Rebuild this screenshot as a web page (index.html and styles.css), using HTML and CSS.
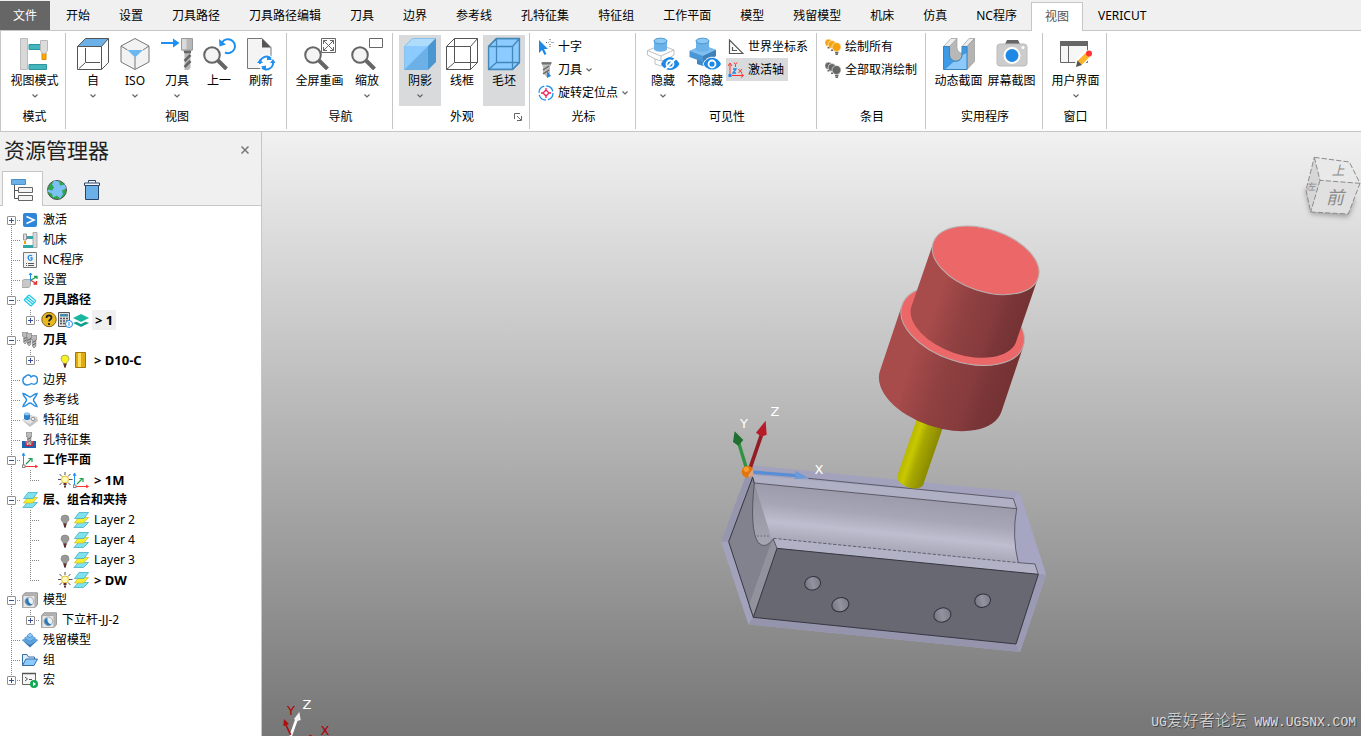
FILE: index.html
```html
<!DOCTYPE html>
<html lang="zh-CN">
<head>
    <meta charset="UTF-8">
    <meta name="viewport" content="width=device-width, initial-scale=1.0">
    <title>PowerMill</title>
    <link rel="stylesheet" href="styles.css">
</head>
<body>
    <!-- shared icons -->
    <svg class="defs" aria-hidden="true">
        <symbol id="chevron" viewBox="0 0 6 4"><path d="M.5 .5L3 3L5.500 .5" fill="none" stroke="#666" stroke-width="1.2"/></symbol>
        <symbol id="wire" viewBox="0 0 32 32">
            <path d="M8.500 .5V24.500H31.500M8.500 24.500L.5 31.500M.5 8.500H24.500V31.500H.5ZM.5 8.500L8.500 .5H31.500L24.500 8.500M31.500 .5V24.500L24.500 31.500" stroke-linejoin="round"/>
        </symbol>
        <symbol id="lens" viewBox="0 0 32 32">
            <circle cx="9" cy="17" r="7.800" fill="#f4f4f4" stroke="#666" stroke-width="2"/>
            <path d="M15 22.500L23.500 31" stroke="#666" stroke-width="4"/>
        </symbol>
        <symbol id="bulbs" viewBox="0 0 16 16">
            <g fill="currentColor" stroke="#fff" stroke-width=".6">
                <circle cx="3.500" cy="3.800" r="3.700"/><circle cx="7" cy="5.500" r="4"/><circle cx="11.500" cy="8" r="4.500"/>
            </g>
            <path d="M2.500 8.700h2M6 11.200h2M10 13.500h3.500M10.500 15.300h2.500" stroke="#666" stroke-width="1.500"/>
        </symbol>
        <symbol id="layers" viewBox="0 0 16 16">
            <path d="M5.500 10.500h10l-5 5H.8z" fill="#7fe0ee" stroke="#38a8bc" stroke-width=".7"/>
            <path d="M5.500 5.500h10l-5 5.500H1.500z" fill="#f5ee30" stroke="#c9b820" stroke-width=".7"/>
            <path d="M6 .5h9.500l-4.500 6H1.500z" fill="#7fe0ee" stroke="#38a8bc" stroke-width=".7"/>
        </symbol>
        <symbol id="bulb" viewBox="0 0 16 16">
            <path d="M8 3a4 4 0 0 0-4 4c0 2 2.500 3 2.500 5h3c0-2 2.500-3 2.500-5a4 4 0 0 0-4-4z" fill="currentColor" stroke="#77776a" stroke-width=".6"/>
            <path d="M6.500 12.500h3M7 14.500h2" stroke="#5a3030" stroke-width="2"/>
        </symbol>
        <symbol id="bulb-lit" viewBox="0 0 16 16">
            <path d="M8 0v3M1 7.500h3M12 7.500h3.500M2.500 2l2.500 2.500M13.500 2L11 4.500M2.500 13L5 10.500M13.500 13L11 10.500" stroke="#555"/>
            <circle cx="8" cy="7.500" r="3.500" fill="#fffbc0" stroke="#e8c020"/>
            <path d="M6.500 12h3M7 14.500h2" stroke="#5a3030" stroke-width="2"/>
        </symbol>
        <symbol id="plane" viewBox="0 0 16 16">
            <path d="M1.500 13V2M0 4l1.500-3L3 4" fill="none" stroke="#1e90e8"/>
            <path d="M3 14.500h12M13 13l2.500 1.500L13 16" fill="none" stroke="#f33"/>
            <path d="M4 12L9 7M6.500 6.500H10V10" fill="none" stroke="#20a050" stroke-width="1.200"/>
            <rect x=".5" y="13" width="2.500" height="2.500" fill="#fff" stroke="#888"/>
        </symbol>
        <symbol id="solid" viewBox="0 0 16 16">
            <path d="M.5 3.500L3 .8h12.500v11.700L13 15.500H.5z" fill="#b4b4b4" stroke="#999"/>
            <rect x="1" y="3.500" width="12" height="12" rx="1" fill="#e6e6e6" stroke="#aaa"/>
            <circle cx="7.300" cy="9.300" r="4.300" fill="#e8f2fa" stroke="#999" stroke-width=".8"/>
            <path d="M4.500 6.500a4 4 0 0 0 6 5.500C8 12 6 10 6.500 6z" fill="#2f78b8"/>
        </symbol>
        <symbol id="drill" viewBox="0 0 6 14">
            <path d="M0 0h6v5H5v7l-2 2-1.500-2V5H0z" fill="#bbb" stroke="#666" stroke-width=".6"/>
            <path d="M1.500 8L5 6M1.500 11L5 9" stroke="#555"/>
        </symbol>
    </svg>

    <nav class="tabs">
        <button class="tab file">文件</button>
        <button class="tab">开始</button>
        <button class="tab">设置</button>
        <button class="tab">刀具路径</button>
        <button class="tab">刀具路径编辑</button>
        <button class="tab">刀具</button>
        <button class="tab">边界</button>
        <button class="tab">参考线</button>
        <button class="tab">孔特征集</button>
        <button class="tab">特征组</button>
        <button class="tab">工作平面</button>
        <button class="tab">模型</button>
        <button class="tab">残留模型</button>
        <button class="tab">机床</button>
        <button class="tab">仿真</button>
        <button class="tab">NC程序</button>
        <button class="tab active">视图</button>
        <button class="tab">VERICUT</button>
    </nav>

    <div class="ribbon">
        <section class="group">
            <div class="tools">
                <button class="big wide">
                    <svg viewBox="0 0 32 32"><path d="M10 6.500h13v5H10zM10 26.500h17.500v5H10z" fill="#45b5bd" stroke="#2c969e"/><path d="M1.500 .5h7v31h-7z" fill="#d8d8d8" stroke="#bbb"/><path d="M23 15h4v6.500h-4z" fill="#ffa800" stroke="#d88a00"/><path d="M21.500 2.500h7v10l-2 3h-3l-2-3z" fill="#dcdcdc" stroke="#b8b8b8"/></svg>
                    <span>视图模式</span>
                    <svg class="chev"><use href="#chevron"/></svg>
                </button>
            </div>
            <h2>模式</h2>
        </section>
        <section class="group">
            <div class="tools">
                <button class="big">
                    <svg viewBox="0 0 32 32"><path d="M.5 8.500L8.500 .5H31.500L24.500 8.500z" fill="#6bb1e8"/><path d="M8.500 10V24.500H23M8 25L2 30.500M.5 8.500H24.500V31.500H.5ZM.5 8.500L8.500 .5H31.500L24.500 8.500M31.500 .5V24.500L24.500 31.500" fill="none" stroke="#555"/></svg>
                    <span>自</span>
                    <svg class="chev"><use href="#chevron"/></svg>
                </button>
                <button class="big">
                    <svg viewBox="0 0 32 32"><path d="M16 .5L30 8v16L16 31.500L2 24V8z" fill="#f2f2f2"/><path d="M8.500 12h15.500L16 19.500z" fill="#6bb8f0"/><path d="M16 .5L30 8v16L16 31.500L2 24V8zM2 8l6.500 4M30 8l-6 4M16 19v12" fill="none" stroke="#777"/></svg>
                    <span>ISO</span>
                    <svg class="chev"><use href="#chevron"/></svg>
                </button>
                <button class="big">
                    <svg viewBox="0 0 32 32"><path d="M0 5h14" stroke="#1e90f0" stroke-width="2"/><path d="M12 .5L18.500 5L12 9.500z" fill="#1e90f0"/><path d="M20.500 .5h11V12l-2 2v16l-2 2h-4V14l-3-2z" fill="#b8b8b8"/><path d="M20.500 .5h5V12h-5z" fill="#dadada"/><path d="M20.500 .5h11V12h-11z" fill="none" stroke="#999"/><path d="M23 14h7M23.500 23l6-6M23.500 29l6-6" stroke="#666" stroke-width="2.500"/></svg>
                    <span>刀具</span>
                    <svg class="chev"><use href="#chevron"/></svg>
                </button>
                <button class="big">
                    <svg viewBox="0 0 32 32"><use href="#lens"/><path d="M19 4.500A7 7 0 1 1 22 14.500" fill="none" stroke="#1e90f0" stroke-width="2"/><path d="M16 1l.5 7.500L23 6.500z" fill="#1e90f0"/></svg>
                    <span>上一</span>
                </button>
                <button class="big">
                    <svg viewBox="0 0 32 32"><path d="M2.500 .5H17l9 9v21H2.500z" fill="#f4f4f4" stroke="#777"/><path d="M17 .5l9 9h-9z" fill="#555"/><circle cx="21.500" cy="25" r="8.500" fill="#fff"/><path d="M15 26a6.500 6.500 0 0 1 11-5.500M28 24a6.500 6.500 0 0 1-11 5.500" fill="none" stroke="#1e90f0" stroke-width="2"/><path d="M12 25h6l-3-4zM25 25h5.500l-2.500-4zM22 17.500l5 4.500h-5zM21 32.500v-5l-5 1z" fill="#1e90f0"/></svg>
                    <span>刷新</span>
                </button>
            </div>
            <h2>视图</h2>
        </section>
        <section class="group">
            <div class="tools">
                <button class="big wide">
                    <svg viewBox="0 0 32 32"><use href="#lens"/><path d="M17.500 .5h14v14h-14z" fill="#fff" stroke="#666"/><path d="M19.500 2.500l10 10M29.500 2.500l-10 10M19.500 6V2.500H23M26 2.500h3.500V6M19.500 9v3.500H23M26 12.500h3.500V9" fill="none" stroke="#666"/></svg>
                    <span>全屏重画</span>
                </button>
                <button class="big">
                    <svg viewBox="0 0 32 32"><use href="#lens"/><path d="M18.500 .5h13v9h-13z" fill="#fff" stroke="#666"/></svg>
                    <span>缩放</span>
                    <svg class="chev"><use href="#chevron"/></svg>
                </button>
            </div>
            <h2>导航</h2>
        </section>
        <section class="group">
            <div class="tools">
                <button class="big on">
                    <svg viewBox="0 0 32 32"><path d="M0 8L8 0h24l-8 8z" fill="#b0dcfc"/><path d="M24 8l8-8v24l-8 8z" fill="#4a96d0"/><path d="M0 8h24v24H0z" fill="#8ccbff"/><path d="M24 8v24H0z" fill="#6bb1e8"/><path d="M.5 31.500v-23L8.500 .5h23" fill="none" stroke="#8ac0e8"/></svg>
                    <span>阴影</span>
                    <svg class="chev"><use href="#chevron"/></svg>
                </button>
                <button class="big">
                    <svg viewBox="0 0 32 32" fill="none" stroke="#555"><use href="#wire"/></svg>
                    <span>线框</span>
                </button>
                <button class="big on">
                    <svg viewBox="0 0 32 32" fill="none" stroke="#4287b8" stroke-width="1.300"><path d="M.5 8.500L8.500 .5h23v24l-7 7H.5z" fill="#8ccbff"/><use href="#wire"/></svg>
                    <span>毛坯</span>
                </button>
            </div>
            <div class="caption">
                <h2>外观</h2>
                <button class="launcher" aria-label="外观选项"><svg viewBox="0 0 8 8"><path d="M.5 6V.5H6M3 3l4 4M7.500 3v4.500H3" fill="none" stroke="#666"/></svg></button>
            </div>
        </section>
        <section class="group">
            <div class="tools stack">
                <button class="small">
                    <svg viewBox="0 0 16 16"><path d="M1 1v13l3-3 2.500 5 2-1-2.500-5H10z" fill="#1e88e5"/><path d="M12 0v2.500M12 5v3M8 3.500h2.500M13.500 3.500H16" stroke="#555" stroke-dasharray="1 1"/></svg>
                    <span>十字</span>
                </button>
                <button class="small">
                    <svg viewBox="0 0 16 16"><path d="M4 .5h9v3H4z" fill="#999"/><path d="M5 3.500h7V12l-3 3.500L5 11z" fill="#bbb"/><path d="M3.500 1h10M5 8l6-4M5 12l6-4" stroke="#666" stroke-width="1.500"/><path d="M9 9v7l4-2z" fill="#1e88e5"/></svg>
                    <span>刀具</span>
                    <svg class="chev"><use href="#chevron"/></svg>
                </button>
                <button class="small">
                    <svg viewBox="0 0 16 16" fill="none"><circle cx="8" cy="8" r="7" stroke="#1e90f0" stroke-width="1.300" stroke-dasharray="9 2"/><path d="M8 5l3 3-3 3-3-3zM8 3v2M8 11v2M3 8h2M11 8h2" stroke="#f0205a" stroke-width="1.300"/></svg>
                    <span>旋转定位点</span>
                    <svg class="chev"><use href="#chevron"/></svg>
                </button>
            </div>
            <h2>光标</h2>
        </section>
        <section class="group">
            <div class="tools">
                <button class="big">
                    <svg viewBox="0 0 32 32"><path d="M.5 12.500L14 7l13 5v5l-7 4v5l-6 2-6-2v-5l-7.500-4zM.5 12.500L14 18l13-6M14 18v5M8 21l6 2 6-2" fill="#fff" stroke="#c0c0c0"/><path d="M7 2.500v9c2 3 11 3 13 0v-9z" fill="#6ab2e8"/><ellipse cx="13.500" cy="3" rx="6.500" ry="2.800" fill="#8cc8f4" stroke="#4f98d0"/><path d="M14 26c4-9 14-9 18.500 0-4.500 8-14.500 8-18.500 0z" fill="#1e88e5"/><circle cx="23" cy="26" r="3.500" fill="#1e88e5" stroke="#fff" stroke-width="1.800"/><path d="M18 31.500L28.500 20.500" stroke="#fff" stroke-width="2"/></svg>
                    <span>隐藏</span>
                    <svg class="chev"><use href="#chevron"/></svg>
                </button>
                <button class="big">
                    <svg viewBox="0 0 32 32"><path d="M8 19h12v7l-6 2-6-2z" fill="#3f86c4"/><path d="M.5 13L14 7l13 5v6l-13 6-13.500-5z" fill="#4b96d4"/><path d="M.5 13L14 7l13 5-13 6z" fill="#7dbdf0"/><path d="M14 18v6l13-6v-6z" fill="#3f80b8"/><path d="M7 2.500v9c2 3 11 3 13 0v-9z" fill="#6ab2e8"/><ellipse cx="13.500" cy="3" rx="6.500" ry="2.800" fill="#8cc8f4" stroke="#4f98d0"/><path d="M14 26c4-9 14-9 18.500 0-4.500 8-14.500 8-18.500 0z" fill="#1e88e5" stroke="#fff"/><circle cx="23" cy="26" r="3.500" fill="#1e88e5" stroke="#fff" stroke-width="1.800"/></svg>
                    <span>不隐藏</span>
                </button>
                <div class="stack">
                    <button class="small">
                        <svg viewBox="0 0 16 16"><path d="M1.500 1v13.500H15zM4.500 8v3.500H9" fill="none" stroke="#555" stroke-width="1.200"/></svg>
                        <span>世界坐标系</span>
                    </button>
                    <button class="small on">
                        <svg viewBox="0 0 16 16" fill="none"><path d="M2 12V2M0 4l2-3 2 3M4 13.500h11M13 11.500l2.500 2-2.500 2M6 .5l1.500 2 1.500-2M7.500 2.500V5M10.500 7l3.500 4M14 7l-3.500 4" stroke="#f33"/><path d="M5 7h3l-3 4h3" stroke="#1e88e5" stroke-width="1.300"/><path d="M.5 12h3v3h-3z" fill="#1e88e5"/></svg>
                        <span>激活轴</span>
                    </button>
                </div>
            </div>
            <h2>可见性</h2>
        </section>
        <section class="group">
            <div class="tools stack items">
                <button class="small amber">
                    <svg><use href="#bulbs"/></svg>
                    <span>绘制所有</span>
                </button>
                <button class="small grey">
                    <svg><use href="#bulbs"/></svg>
                    <span>全部取消绘制</span>
                </button>
            </div>
            <h2>条目</h2>
        </section>
        <section class="group">
            <div class="tools">
                <button class="big wide">
                    <svg viewBox="0 0 32 32"><path d="M6.500 8.500L14 .5V10q1 5 5 5v2a6.200 6.200 0 0 1-12.500 0z" fill="#b8b8b8" stroke="#999" stroke-width=".6"/><path d="M.5 8.500L8 .5h6L6.500 8.500zM19 8.500L26 .5h5.500L24 8.500z" fill="#ececec" stroke="#999" stroke-width=".7"/><path d="M24 8.500l7.500-8v23l-7.500 8z" fill="#b4b4b4" stroke="#999" stroke-width=".7"/><path d="M.5 8.500h6V17A6.200 6.200 0 0 0 19 17V8.500h5v23H.5z" fill="#3d9ae6"/><path d="M24 15v16.500H2L11 23.500q7 1 8-6.500z" fill="#8cc8fa"/><path d="M.5 8.500h6V17A6.200 6.200 0 0 0 19 17V8.500h5v23H.5z" fill="none" stroke="#3a82b8"/></svg>
                    <span>动态截面</span>
                </button>
                <button class="big wide">
                    <svg viewBox="0 0 32 32"><path d="M11 2h11l2 4H9z" fill="#666"/><rect x="1" y="6" width="30" height="22" rx="3" fill="#ccc" stroke="#bbb"/><circle cx="16" cy="17.500" r="8.500" fill="#fff"/><circle cx="16" cy="17.500" r="6.500" fill="#1e88e5"/><circle cx="27" cy="9.500" r="1.500" fill="#fff"/></svg>
                    <span>屏幕截图</span>
                </button>
            </div>
            <h2>实用程序</h2>
        </section>
        <section class="group">
            <div class="tools">
                <button class="big wide">
                    <svg viewBox="0 0 32 32"><path d="M.5 4v20.500h27V4z" fill="#f6f6f6" stroke="#666"/><path d="M0 3h28v5H0z" fill="#666"/><path d="M8.500 8v16" stroke="#666"/><path d="M14 30l2-9 10-10 7 6-11 12z" fill="#fff"/><path d="M16.500 28l1.500-5.500L26.500 14l4 4-8.500 8.500z" fill="#fbb42a"/><path d="M16 29l1.500-6.500 4.500 4.500z" fill="#555"/><circle cx="29" cy="15.500" r="3" fill="#f33"/></svg>
                    <span>用户界面</span>
                    <svg class="chev"><use href="#chevron"/></svg>
                </button>
            </div>
            <h2>窗口</h2>
        </section>
    </div>

    <main class="workspace">
        <aside class="explorer">
            <header class="explorer-head">
                <h1>资源管理器</h1>
                <button class="close" aria-label="关闭"><svg viewBox="0 0 8 8"><path d="M.5 .5l7 7M7.500 .5l-7 7" stroke="#777" stroke-width="1.500"/></svg></button>
            </header>
            <div class="views">
                <button class="view active" aria-label="树"><svg viewBox="0 0 22 22"><path d="M.5 .5h14v5H.5z" fill="#6bb1e8" stroke="#4a90c8"/><path d="M3.500 6v13.500H7M3.500 11.500H7" fill="none" stroke="#555"/><path d="M7.500 8.500h14v5h-14zM7.500 16.500h14v5h-14z" fill="#f4f4f4" stroke="#666"/></svg></button>
                <button class="view" aria-label="网络"><svg viewBox="0 0 22 22"><circle cx="11" cy="11" r="9.500" fill="#2aa84a" stroke="#555"/><path d="M8 1.500l5 1 1 4 5-1 1 4-4 2 1 4-3 4-3-3-4 2-1-4-5-2 1-2 4 1 2-3-2-3z" fill="#7cc0f4"/></svg></button>
                <button class="view" aria-label="回收站"><svg viewBox="0 0 22 22"><path d="M4.500 6.500h13v14h-13z" fill="#6bb1e8" stroke="#2a4468"/><path d="M3.500 4h15v2.500h-15zM7.500 3.500v-2h7v2" fill="#f4f8fc" stroke="#2a4468"/></svg></button>
            </div>
            <ul class="tree">
                <li><div class="row"><button class="knob plus" aria-label="展开"></button><svg viewBox="0 0 16 16"><rect x="1" y="1" width="14" height="14" rx="2" fill="#2f86d8"/><path d="M4.500 4.500L12 8l-7.500 3.500" fill="none" stroke="#fff" stroke-width="1.600"/></svg><span class="name">激活</span></div></li>
                <li><div class="row"><i class="stub"></i><svg viewBox="0 0 16 16"><path d="M11 .5h4v15h-4z" fill="#d8d8d8" stroke="#aaa"/><path d="M1 13h10v3H1zM5 4h6v3H5z" fill="#35a5a5"/><path d="M1.500 2h3v6h-3z" fill="#ddd" stroke="#999"/><path d="M2 9h2v3H2z" fill="#f0a000"/></svg><span class="name">机床</span></div></li>
                <li><div class="row"><i class="stub"></i><svg viewBox="0 0 16 16"><path d="M1.500 .5h13v15h-13z" fill="#f2f2f2" stroke="#777"/><path d="M10 4A2.200 2.500 0 1 0 10 7.500V5.800H8.300" fill="none" stroke="#1e88e5" stroke-width="1.200"/><path d="M4 11.500h1M6 11.500h6M4 13.500h1M6 13.500h6" stroke="#555"/></svg><span class="name">NC程序</span></div></li>
                <li><div class="row"><i class="stub"></i><svg viewBox="0 0 16 16"><path d="M0 9l2-1.500h6.500v6L7 15.500H0z" fill="#c8c8c8" stroke="#aaa"/><path d="M8.500 9V1M7 3l1.500-2L10 3" fill="none" stroke="#1e88e5"/><path d="M9 8l5.500-3M12 4.500h3V7" fill="none" stroke="#20a050" stroke-width="1.300"/><path d="M9 8.500l5.500 3M14.500 9v3h-3" fill="none" stroke="#e03030" stroke-width="1.300"/></svg><span class="name">设置</span></div></li>
                <li>
                    <div class="row"><button class="knob" aria-label="折叠"></button><svg viewBox="0 0 16 16"><path d="M2 8l7 6M3.500 6l7 6M5 4.500l7 6M7 3l7 6M2 8l5-5M14 9l-5 5" fill="none" stroke="#20c8e8" stroke-width="1.200"/></svg><b class="name">刀具路径</b></div>
                    <ul>
                        <li><div class="row"><button class="knob plus" aria-label="展开"></button><svg viewBox="0 0 16 16"><circle cx="8" cy="7.500" r="7.200" fill="#e8b820" stroke="#806010"/><path d="M5.500 6c0-3.500 5-3 5-.5C10.500 7.500 8 7.500 8 9.500M8 11v2" fill="none" stroke="#222" stroke-width="1.800"/></svg><svg viewBox="0 0 16 16"><path d="M1.500 .5h11v14h-11z" fill="#ddd" stroke="#555"/><path d="M3 2h8v2.500H3z" fill="#48a"/><path d="M3 6.500h8M3 9h8M3 11.500h5" stroke="#555" stroke-width="1.500" stroke-dasharray="2 1"/><circle cx="12" cy="12" r="3.500" fill="#fff" stroke="#1e88e5"/><path d="M12 10v4" stroke="#1e88e5"/></svg><svg viewBox="0 0 16 16"><path d="M0 11l8-3 8 3-8 4z" fill="#10a090"/><path d="M0 8l8-3 8 3-8 4z" fill="#fff"/><path d="M0 6l8-4 8 4-8 4z" fill="#18b8a0"/></svg><b class="name latin current">&gt; 1</b></div></li>
                    </ul>
                </li>
                <li>
                    <div class="row"><button class="knob" aria-label="折叠"></button><svg viewBox="0 0 16 16"><use href="#drill" x="0" y="0" width="6" height="12"/><use href="#drill" x="4" y="1" width="6" height="13"/><use href="#drill" x="9" y="3" width="6" height="13"/></svg><b class="name">刀具</b></div>
                    <ul>
                        <li><div class="row"><button class="knob plus" aria-label="展开"></button><svg></svg><svg class="yellow"><use href="#bulb"/></svg><svg viewBox="0 0 16 16"><path d="M2.500 .5h10v15h-10z" fill="#e0aa10" stroke="#a07808"/><path d="M5 1h3v14H5z" fill="#ffe060"/></svg><b class="name latin">&gt; D10-C</b></div></li>
                    </ul>
                </li>
                <li><div class="row"><i class="stub"></i><svg viewBox="0 0 16 16"><path d="M4.500 13a4.500 4.500 0 0 1-1-8.500C5.500 2 8.500 3 9 5c3-2.500 6.500-1 6.500 3s-3.500 5-6 3.500c-1.500 1-3 1.500-5 1.500z" fill="none" stroke="#2a8ee0" stroke-width="1.400"/></svg><span class="name">边界</span></div></li>
                <li><div class="row"><i class="stub"></i><svg viewBox="0 0 16 16"><path d="M1 1.500C5 2 6 5 8 5s3-3 7-3.500c-.5 3.500-3.500 4.500-3.500 6.500s3 3.500 3.500 6.500C11 14 10 11 8 11s-3 3-7 3.500C1.500 11 4.500 10 4.500 8S1.500 5 1 1.500z" fill="none" stroke="#2a8ee0" stroke-width="1.500"/></svg><span class="name">参考线</span></div></li>
                <li><div class="row"><i class="stub"></i><svg viewBox="0 0 16 16"><path d="M0 8l8 7 8-6-1-4-7-2z" fill="#c4c4c4"/><path d="M0 8l8 4 7-6-5-2z" fill="#e4e4e4"/><path d="M2 1.500v5c1 2 5 2 6 0v-5z" fill="#2f80c8"/><ellipse cx="5" cy="1.800" rx="3" ry="1.500" fill="#8cc8f4"/><ellipse cx="11" cy="7" rx="2" ry="1.500" fill="#fff" stroke="#888"/></svg><span class="name">特征组</span></div></li>
                <li><div class="row"><i class="stub"></i><svg viewBox="0 0 16 16"><path d="M0 9h3l2 5h4l2-5h3v7H0z" fill="#1a66b0"/><path d="M4 9v4.500h6V9" fill="none" stroke="#e02030" stroke-width="1.500"/><use href="#drill" x="4" y="0" width="6" height="13"/></svg><span class="name">孔特征集</span></div></li>
                <li>
                    <div class="row"><button class="knob" aria-label="折叠"></button><svg><use href="#plane"/></svg><b class="name">工作平面</b></div>
                    <ul>
                        <li><div class="row"><i class="stub"></i><svg></svg><svg><use href="#bulb-lit"/></svg><svg><use href="#plane"/></svg><b class="name latin">&gt; 1M</b></div></li>
                    </ul>
                </li>
                <li>
                    <div class="row"><button class="knob" aria-label="折叠"></button><svg><use href="#layers"/></svg><b class="name">层、组合和夹持</b></div>
                    <ul>
                        <li><div class="row"><i class="stub"></i><svg></svg><svg class="off"><use href="#bulb"/></svg><svg><use href="#layers"/></svg><span class="name">Layer 2</span></div></li>
                        <li><div class="row"><i class="stub"></i><svg></svg><svg class="off"><use href="#bulb"/></svg><svg><use href="#layers"/></svg><span class="name">Layer 4</span></div></li>
                        <li><div class="row"><i class="stub"></i><svg></svg><svg class="off"><use href="#bulb"/></svg><svg><use href="#layers"/></svg><span class="name">Layer 3</span></div></li>
                        <li><div class="row"><i class="stub"></i><svg></svg><svg><use href="#bulb-lit"/></svg><svg><use href="#layers"/></svg><b class="name latin">&gt; DW</b></div></li>
                    </ul>
                </li>
                <li>
                    <div class="row"><button class="knob" aria-label="折叠"></button><svg><use href="#solid"/></svg><span class="name">模型</span></div>
                    <ul>
                        <li><div class="row"><button class="knob plus" aria-label="展开"></button><svg><use href="#solid"/></svg><span class="name">下立杆-JJ-2</span></div></li>
                    </ul>
                </li>
                <li><div class="row"><i class="stub"></i><svg viewBox="0 0 16 16"><path d="M0 8l8 7.500L16 8l-4-1-4-6-4 6z" fill="#3878b4"/><path d="M0 8l8 5 8-5-8-4z" fill="#5ca4e0"/><path d="M2.500 6L8 9.500 13.500 6 8 3z" fill="#78b8ec" stroke="#3c80bc" stroke-width=".6"/><path d="M5 3.500L8 6l3-2.500L8 1z" fill="#8cc8f8" stroke="#3c80bc" stroke-width=".6"/></svg><span class="name">残留模型</span></div></li>
                <li><div class="row"><i class="stub"></i><svg viewBox="0 0 16 16"><path d="M.5 13.500v-11H5L6.500 5h6v2" fill="#d8ecfc" stroke="#3a6ea0"/><path d="M.5 13.500L4 7h11.500L12 13.500z" fill="#8ccbff" stroke="#3a6ea0"/></svg><span class="name">组</span></div></li>
                <li><div class="row"><button class="knob plus" aria-label="展开"></button><svg viewBox="0 0 16 16"><path d="M.5 1.500h13v11H.5z" fill="#f6f6f6" stroke="#666"/><path d="M0 1.500h14" stroke="#555" stroke-width="1.500"/><path d="M3 5l2.500 2L3 9M7 7.500h3" fill="none" stroke="#555"/><circle cx="12" cy="12" r="4" fill="#10a850"/><path d="M11 9.800l3 2.200-3 2.200z" fill="#fff"/></svg><span class="name">宏</span></div></li>
            </ul>
        </aside>

        <div class="viewport">
            <svg class="scene" viewBox="262 132 1099 604" preserveAspectRatio="xMidYMid slice">
                <defs>
                    <linearGradient id="steel" gradientUnits="userSpaceOnUse" x1="570" y1="318" x2="553" y2="487">
                        <stop offset="0" stop-color="#9b9bab"/><stop offset=".35" stop-color="#a6a6b6"/><stop offset=".66" stop-color="#bebed0"/><stop offset="1" stop-color="#a4a4b4"/>
                    </linearGradient>
                    <linearGradient id="bore" x1="0" y1="0" x2="0" y2="1"><stop offset="0" stop-color="#8e8e9a"/><stop offset="1" stop-color="#a6a6b2"/></linearGradient>
                    <linearGradient id="hole"><stop offset="0" stop-color="#777783"/><stop offset=".5" stop-color="#9292a0"/><stop offset="1" stop-color="#7c7c88"/></linearGradient>
                    <linearGradient id="shank" gradientUnits="userSpaceOnUse" x1="220" y1="83" x2="534" y2="189">
                        <stop offset="0" stop-color="#a84b4b"/><stop offset=".2" stop-color="#a84b4b"/><stop offset=".48" stop-color="#8f4041"/><stop offset=".72" stop-color="#863b3d"/><stop offset=".85" stop-color="#793537"/><stop offset="1" stop-color="#753233"/>
                    </linearGradient>
                    <linearGradient id="holder" gradientUnits="userSpaceOnUse" x1="126" y1="270" x2="490" y2="394">
                        <stop offset="0" stop-color="#a84b4b"/><stop offset=".2" stop-color="#a84b4b"/><stop offset=".48" stop-color="#8f4041"/><stop offset=".72" stop-color="#863b3d"/><stop offset=".85" stop-color="#793537"/><stop offset="1" stop-color="#753233"/>
                    </linearGradient>
                    <linearGradient id="cutter" gradientUnits="userSpaceOnUse" x1="112" y1="782" x2="190" y2="808">
                        <stop offset="0" stop-color="#b8b800"/><stop offset=".25" stop-color="#c8c800"/><stop offset=".5" stop-color="#a8a800"/><stop offset="1" stop-color="#8a8a00"/>
                    </linearGradient>
                    <filter id="soft" x="-50%" y="-50%" width="200%" height="200%"><feGaussianBlur stdDeviation="8"/></filter>
                </defs>

                <!-- block and part -->
                <g transform="translate(700 390) scale(.33333)">
                    <path d="M150 225L958 306L1038 553L960 786L145 703L63 455z" fill="#a2a2bc"/>
                    <path d="M958 306L1038 553L960 786L948 762L1015 553L950 518L940 326z" fill="#a6a6c3"/>
                    <path d="M145 703L160 682L948 762L960 786z" fill="#9494ac"/>
                    <path d="M1015 553L1038 553L960 786L948 762z" fill="#9a9ab4"/>
                    <path d="M150 225L63 455L86 455L158 262z" fill="#9696ae"/>
                    <path d="M158 258L86 455L160 682L231 475L220 447Q195 480 175 458Q148 420 163 279z" fill="#82828e"/>
                    <path d="M231 475L220 447L212 462L145 650L160 682z" fill="#92929e"/>
                    <path d="M158 255L940 326L950 356L163 279z" fill="#b0b0c4"/>
                    <path d="M163 279L950 356Q935 440 955 518L220 445L213 441z" fill="url(#steel)"/>
                    <path d="M163 279L213 441L218 447Q195 480 175 458Q148 420 163 279z" fill="url(#bore)"/>
                    <path d="M220 445L1005 522L1015 553L231 475z" fill="#b2b2c6"/>
                    <path d="M231 475L1015 553L948 762L160 682z" fill="#686873"/>
                    <g fill="none" stroke="#363640" stroke-width="3">
                        <path d="M231 475L1015 553L948 762L160 682L231 475M160 682L86 455L158 262L163 279"/>
                        <path d="M163 279L950 356L940 326M163 279Q148 420 175 458Q195 480 220 447L231 475M950 356Q935 440 955 518L1005 522L1015 553" stroke-width="2"/>
                        <path d="M325 265L940 326" stroke-width="2"/>
                        <path d="M220 445L955 518" stroke-width="2" stroke-dasharray="10 5"/>
                        <path d="M172 438h35" stroke-width="2" stroke-dasharray="4 6"/>
                    </g>
                    <g fill="url(#hole)" stroke="#30303a" stroke-width="3">
                        <ellipse cx="338" cy="580" rx="24" ry="20" transform="rotate(-15 338 580)"/>
                        <ellipse cx="421" cy="644" rx="26" ry="21" transform="rotate(-15 421 644)"/>
                        <ellipse cx="727" cy="675" rx="26" ry="21" transform="rotate(-15 727 675)"/>
                        <ellipse cx="848" cy="632" rx="24" ry="20" transform="rotate(-15 848 632)"/>
                    </g>
                </g>

                <!-- tool and holder -->
                <g transform="translate(860 215) scale(.33333)">
                    <path d="M179 587L112 782A41 23 18.600 0 0 190 808L257 613z" fill="url(#cutter)"/>
                    <path d="M126 270L60 467A192 108 18.600 0 0 424 591L490 394z" fill="url(#holder)"/>
                    <ellipse cx="308" cy="332" rx="192" ry="108" transform="rotate(18.600 308 332)" fill="#ec6868" stroke="#b8b0b0" stroke-width="3"/>
                    <path d="M220 83L153 278A166 93 18.600 0 0 467 384L534 189z" fill="url(#shank)"/>
                    <ellipse cx="377" cy="136" rx="166" ry="93" transform="rotate(18.600 377 136)" fill="#ec6868" stroke="#b8b0b0" stroke-width="3"/>
                </g>

                <!-- active axes -->
                <g transform="translate(700 390) scale(.33333)">
                    <path d="M150 235L186 130" stroke="#941c24" stroke-width="11"/>
                    <path d="M197 92L168 128L185 140L200 134z" fill="#b81c28"/>
                    <path d="M138 230L115 155" stroke="#2e9440" stroke-width="10"/>
                    <path d="M104 124L99 156L115 167L130 150z" fill="#1f7030"/>
                    <path d="M155 246L290 257" stroke="#5a8ed4" stroke-width="10"/>
                    <path d="M326 264L287 243L284 268z" fill="#6a9ad8"/>
                    <circle cx="143" cy="245" r="18" fill="#e0760c"/>
                    <circle cx="139" cy="238" r="8" fill="#ff9a30"/>
                    <path d="M145 255L160 235V256L146 263z" fill="#d8a488"/>
                    <g class="axis" fill="#fff">
                        <text x="225" y="79">Z</text><text x="132" y="115">Y</text><text x="357" y="253">X</text>
                    </g>
                </g>

                <!-- world axes -->
                <g transform="translate(262 670) scale(.33333)">
                    <path d="M86 198L103 150" stroke="#fff" stroke-width="8"/>
                    <path d="M112 126L96 147L104 154L116 150z" fill="#f4f4f4"/>
                    <path d="M86 195L72 165" stroke="#b00c0c" stroke-width="5"/>
                    <path d="M66 147L64 168L72 166L81 162zM140 198l5-4 7 4z" fill="#b00c0c"/>
                    <g class="axis" fill="#b00000">
                        <text x="135" y="116" fill="#fff">Z</text><text x="87" y="136">Y</text><text x="189" y="195">X</text>
                    </g>
                </g>

                <!-- view cube -->
                <g transform="translate(1280 140) scale(.33333)">
                    <path d="M75 150L92 222L205 232L225 180L120 130z" fill="#777" opacity=".6" filter="url(#soft)"/>
                    <path d="M103 52L208 66L240 130L120 121z" fill="#e9e9e9"/>
                    <path d="M103 52L120 121L92 216L78 150z" fill="#d6d6d6"/>
                    <path d="M120 121L240 130L205 222L92 216z" fill="#e0e0e0"/>
                    <path d="M103 52L208 66L240 130L205 222L92 216L78 150zM103 52L120 121L240 130M120 121L92 216" fill="none" stroke="#8c8c8c" stroke-width="3" stroke-dasharray="16 6"/>
                    <g class="face" fill="#8c8c8c">
                        <text x="165" y="192" font-size="54">前</text>
                        <text x="174" y="104" font-size="38">上</text>
                        <text x="93" y="150" font-size="28">左</text>
                    </g>
                </g>
            </svg>
            <p class="watermark"><span>UG</span>爱好者论坛<span> WWW.UGSNX.COM</span></p>
        </div>
    </main>
</body>
</html>
```
FILE: styles.css
```css
* {
    margin: 0;
    padding: 0;
    box-sizing: border-box;
}
body {
    display: flex;
    flex-direction: column;
    height: 100vh;
    overflow: hidden;
    font-family: "Noto Sans", "Noto Sans CJK SC", sans-serif;
    font-size: 12px;
    line-height: 16px;
    color: #000;
    background: #f0f0f0;
}
button {
    border: 0;
    background: none;
    font: inherit;
    color: inherit;
    white-space: nowrap;
}
svg {
    display: block;
    flex: none;
}
.defs {
    position: absolute;
    width: 0;
    height: 0;
}

/* ribbon tabs */
.tabs {
    display: flex;
    height: 31px;
    padding-top: 1px;
    border-bottom: 1px solid #c6c6c6;
}
.tab {
    padding: 0 14px 0 15px;
}
.tab.file {
    width: 50px;
    margin-right: 1px;
    padding: 0;
    color: #fff;
    background: #666;
}
.tab.active {
    margin: 1px 0 -1px;
    padding: 0 13px;
    border: 1px solid #c6c6c6;
    border-bottom: 0;
    color: #555;
    background: #fff;
}

/* ribbon */
.ribbon {
    display: flex;
    padding: 2px 0 2px 1px;
    border-bottom: 1px solid #c6c6c6;
    border-left: 1px solid #c6c6c6;
    background: #fff;
}
.group {
    display: flex;
    flex-direction: column;
    padding: 2px 4px 4px 6px;
    border-right: 1px solid #c6c6c6;
}
.group h2 {
    flex: 1;
    font-size: 12px;
    font-weight: normal;
    text-align: center;
}
.tools {
    display: flex;
    height: 71px;
    margin-bottom: 3px;
}
.caption {
    display: flex;
    align-items: center;
}
.launcher {
    width: 8px;
    height: 8px;
    margin: 0 3px 0 -11px;
}
.stack {
    display: flex;
    flex-direction: column;
    align-items: flex-start;
    width: 86px;
}
.tools.stack {
    width: 95px;
}
.tools.items {
    width: 98px;
}
.big {
    display: flex;
    flex-direction: column;
    align-items: center;
    width: 42px;
    padding-top: 3px;
}
.big.wide {
    width: 53px;
}
.big svg {
    width: 32px;
    height: 32px;
    margin-bottom: 3px;
    overflow: visible;
}
.big .chev {
    margin-top: 5px;
}
.big .chev,
.small .chev {
    width: 6px;
    height: 4px;
}
.small {
    display: flex;
    align-items: center;
    gap: 4px;
    height: 23px;
    padding: 0 4px 0 2px;
}
.small svg {
    width: 16px;
    height: 16px;
}
.on {
    background: #d8dadc;
}
.amber svg {
    color: #f5a210;
}
.grey svg {
    color: #666;
}

/* explorer */
.workspace {
    display: flex;
    flex: 1;
    min-height: 0;
}
.explorer {
    display: flex;
    flex-direction: column;
    width: 262px;
    border-right: 1px solid #c6c6c6;
}
.explorer-head {
    display: flex;
    align-items: center;
    justify-content: space-between;
    height: 39px;
    padding: 0 12px 4px 4px;
}
.explorer-head h1 {
    font-size: 21px;
    line-height: 28px;
    font-weight: normal;
    color: #222;
}
.close svg {
    width: 8px;
    height: 8px;
}
.views {
    display: flex;
    height: 35px;
    padding-left: 2px;
    border-bottom: 1px solid #c6c6c6;
}
.view {
    width: 35px;
    padding: 4px 0 0 3px;
}
.view.active {
    width: 41px;
    height: 35px;
    padding: 2px 0 0 8px;
    border: 1px solid #c6c6c6;
    border-bottom: 0;
    background: #fff;
}
.view svg {
    width: 22px;
    height: 22px;
}
.tree {
    flex: 1;
    padding-top: 4px;
    background: #fff;
}
.tree,
.tree ul {
    list-style: none;
}
/* dotted guides run down the left edge of every list */
.tree > li {
    background: repeating-linear-gradient(#888 0 1px, transparent 1px 2px) 11px 0 / 1px 100% no-repeat;
}
.tree > li:first-child {
    background-position: 11px 10px;
}
.tree > li:last-child {
    background-size: 1px 10px;
}
.tree ul {
    margin-left: 19px;
    background: repeating-linear-gradient(#888 0 1px, transparent 1px 2px) 11px 0 / 1px calc(100% - 10px) no-repeat;
}
.row {
    display: flex;
    align-items: center;
    height: 20px;
    padding-left: 7px;
    background: repeating-linear-gradient(90deg, #888 0 1px, transparent 1px 2px) 11px 10px / 10px 1px no-repeat;
}
.row svg {
    width: 16px;
    height: 16px;
}
.knob,
.stub {
    flex: none;
    width: 9px;
    height: 9px;
    margin-right: 6px;
}
.knob {
    border: 1px solid #919191;
    border-radius: 1px;
    background: linear-gradient(#3a4c9c, #3a4c9c) center / 5px 1px no-repeat #fff;
}
.knob.plus {
    background: linear-gradient(#3a4c9c, #3a4c9c) center / 5px 1px no-repeat, linear-gradient(#3a4c9c, #3a4c9c) center / 1px 5px no-repeat, #fff;
}
.name {
    margin-left: 5px;
    white-space: nowrap;
}
.name.latin {
    font-size: 13px;
}
.name.current {
    margin-left: 3px;
    padding: 2px 3px;
    background: #f0f0f0;
}
.yellow {
    color: #f8f020;
}
.off {
    color: #999;
}

/* 3D view */
.viewport {
    position: relative;
    flex: 1;
    min-width: 0;
    background: linear-gradient(#f1f1f1, #767676);
}
.scene {
    width: 100%;
    height: 100%;
}
.axis {
    font-family: "DejaVu Sans", sans-serif;
    font-size: 39px;
    text-anchor: middle;
}
.face {
    font-family: "Noto Sans CJK SC", sans-serif;
    font-style: italic;
    text-anchor: middle;
}
.watermark {
    position: absolute;
    right: 5px;
    bottom: 3px;
    font-family: "Noto Sans CJK SC", sans-serif;
    font-size: 16px;
    font-weight: 300;
    line-height: 20px;
    color: #ddd;
    text-shadow: 1px 1px 0 #444;
    white-space: pre;
}
.watermark span {
    font-family: "Liberation Mono", monospace;
    font-size: 13px;
}
```
